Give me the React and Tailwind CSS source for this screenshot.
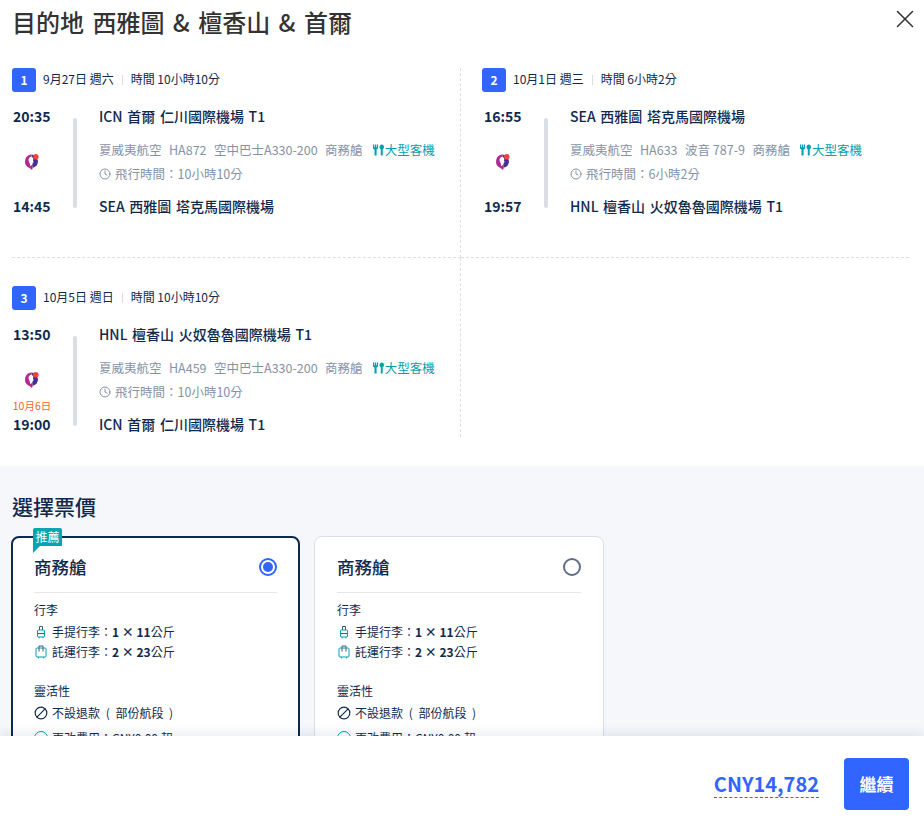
import { Clock, Ban, X } from 'lucide-react';

const FONT = "font-['Noto_Sans_CJK_TC','Noto_Sans',sans-serif]";

const segments = [
  {
    n: 1, date: '9月27日 週六', total: '時間 10小時10分',
    dep: '20:35', from: 'ICN 首爾 仁川國際機場 T1', arr: '14:45', to: 'SEA 西雅圖 塔克馬國際機場',
    flight: 'HA872', plane: '空中巴士A330-200', dur: '10小時10分',
  },
  {
    n: 2, date: '10月1日 週三', total: '時間 6小時2分',
    dep: '16:55', from: 'SEA 西雅圖 塔克馬國際機場', arr: '19:57', to: 'HNL 檀香山 火奴魯魯國際機場 T1',
    flight: 'HA633', plane: '波音 787-9', dur: '6小時2分',
  },
  {
    n: 3, date: '10月5日 週日', total: '時間 10小時10分',
    dep: '13:50', from: 'HNL 檀香山 火奴魯魯國際機場 T1', arr: '19:00', to: 'ICN 首爾 仁川國際機場 T1',
    flight: 'HA459', plane: '空中巴士A330-200', dur: '10小時10分', nextDay: '10月6日',
  },
];

function AirlineLogo() {
  return (
    <svg viewBox="0 0 16 18" className="w-4 h-[18px]">
      <path d="M7.500 1.500A7 7 0 0 0 5.500 15l2.500 2 .8-2.200L7.500 8z" fill="#b3278f" />
      <path d="M7.500 1.500a7 7 0 0 1 5 2.500l1.500 4a7 7 0 0 1-5.200 6.800L7.500 8z" fill="#4a2d91" />
      <path d="M7.800 3.500C5.300 3.800 4 6 4.800 8.300c.5 1.500 1.500 2.500 1.300 4.700 1.700-.6 2.700-1.900 2.700-3.300l1-.8-.8-1 .3-2.200z" fill="#fff" />
      <circle cx="11.800" cy="3.800" r="2.800" fill="#f0443c" />
    </svg>
  );
}

function MealIcon() {
  return (
    <svg viewBox="0 0 12 12" className="w-[13px] h-3 shrink-0" fill="#00a0ac">
      <path d="M.5.500h1.200v2.800h.7V.500h1.200v2.800h.7V.500h1.200v3.600c0 .8-.6 1.400-1.400 1.500v5.900H2V5.600C1.100 5.500.5 4.900.5 4.100z" />
      <path d="M9.300.500c1.200 0 2.200 1 2.200 2.500 0 1.200-.7 2.200-1.300 2.400v6.100H8.300V5.400C7.700 5.200 7 4.200 7 3 7 1.500 8.100.500 9.300.500z" />
    </svg>
  );
}

function CabinBag() {
  return (
    <svg viewBox="0 0 14 14" className="w-3.5 h-3.5 shrink-0" fill="none" strokeWidth="1">
      <path d="M5.500 5V1.500h3V5" stroke="#455873" />
      <rect x="3.500" y="5" width="7" height="7" rx="1" stroke="#00a0ac" />
      <path d="M3.500 8.500h7" stroke="#455873" />
      <path d="M5 12v1.300M9 12v1.300" stroke="#00a0ac" />
    </svg>
  );
}

function CheckedBag() {
  return (
    <svg viewBox="0 0 14 14" className="w-3.5 h-3.5 shrink-0" fill="none" strokeWidth="1">
      <path d="M5 3V1h4v2" stroke="#455873" />
      <rect x="2" y="3" width="10" height="9" rx="1" stroke="#00a0ac" />
      <path d="M5 3v3.500M9 3v3.500" stroke="#455873" />
      <path d="M4.500 12v1.300M9.500 12v1.300" stroke="#00a0ac" />
    </svg>
  );
}

function Segment({ s }) {
  return (
    <div>
      <div className="flex items-center h-6">
        <span className="w-6 h-6 rounded-[3px] bg-[#3264ff] text-white text-xs font-bold flex items-center justify-center">{s.n}</span>
        <span className="ml-[7px] text-xs leading-[22px] mb-0.5 text-[#0f294d]">{s.date}</span>
        <span className="ml-2 mr-2 w-px h-2.5 bg-[#dadfe6]"></span>
        <span className="text-xs leading-[22px] mb-0.5 text-[#0f294d]">{s.total}</span>
      </div>
      <div className="flex mt-3 h-[114px]">
        <div className={`flex flex-col items-start shrink-0 ${s.n === 2 ? 'w-[62px] pl-[2px]' : 'w-[61px] pl-px'}`}>
          <div className="text-sm leading-6 font-bold text-[#0f294d]">{s.dep}</div>
          <div className="flex-1 w-[38px] flex flex-col items-center justify-start pt-[25px]">
            <AirlineLogo />
            {s.nextDay && <div className="mt-[11px] text-[10.500px] leading-3 text-[#ff6421] whitespace-nowrap">{s.nextDay}</div>}
          </div>
          <div className="text-sm leading-6 font-bold text-[#0f294d]">{s.arr}</div>
        </div>
        <div className="w-1 h-[90px] mt-[14px] rounded-full bg-[#dadfe6] shrink-0"></div>
        <div className="ml-[22px] flex flex-col min-w-0">
          <div className="text-sm leading-6 font-medium text-[#0f294d] whitespace-nowrap [word-spacing:1.500px]">{s.from}</div>
          <div className="flex-1 pt-[10px]">
            <div className="flex items-center text-[12.5px] leading-6 text-[#8592a6] whitespace-nowrap">
              <span>夏威夷航空</span>
              <span className="ml-[7.500px]">{s.flight}</span>
              <span className="ml-[7.500px]">{s.plane}</span>
              <span className="ml-[7.500px]">商務艙</span>
              <span className="ml-[9px] flex items-center text-[#00a0ac]"><MealIcon />大型客機</span>
            </div>
            <div className="mt-px flex items-center text-[12.5px] leading-[22px] text-[#8592a6]">
              <Clock className="w-3 h-3 mr-1" />飛行時間：{s.dur}
            </div>
          </div>
          <div className="text-sm leading-6 font-medium text-[#0f294d] whitespace-nowrap [word-spacing:1.500px]">{s.to}</div>
        </div>
      </div>
    </div>
  );
}

function FareCard({ selected }) {
  return (
    <div className={`relative h-[240px] shrink-0 bg-white rounded-lg ${selected ? 'w-[289px] px-[21px] border-2 border-[#0f294d]' : 'w-[290px] px-[22px] border border-[#dadfe6]'}`}>
      {selected && (
        <div className="absolute left-[20px] top-[-10px] w-[29px] h-[18px] bg-[#00a7b3] rounded-t-[2px] text-white text-xs leading-[18px] text-center">
          推薦
          <div className="absolute left-0 top-[18px] w-0 h-0 border-t-[7px] border-t-[#00a7b3] border-r-[7px] border-r-transparent"></div>
        </div>
      )}
      <div className={`flex items-center justify-between border-b border-[#e4e7ec] ${selected ? 'h-[55px] pt-1' : 'h-[56px] pt-[5px]'}`}>
        <span className="text-[17.500px] font-medium text-[#0f294d]">商務艙</span>
        {selected ? (
          <span className="w-[18px] h-[18px] rounded-full border-2 border-[#3264ff] flex items-center justify-center">
            <span className="w-[10px] h-[10px] rounded-full bg-[#3264ff]"></span>
          </span>
        ) : (
          <span className="w-[18px] h-[18px] rounded-full border-2 border-[#5f6f87]"></span>
        )}
      </div>
      <div className="mt-[7px] text-xs leading-5 text-[#0f294d]">行李</div>
      <div className="mt-[2px] flex items-center text-xs leading-5 text-[#0f294d]">
        <CabinBag /><span className="ml-1">手提行李：<b>1 × 11</b>公斤</span>
      </div>
      <div className="flex items-center text-xs leading-5 text-[#0f294d]">
        <CheckedBag /><span className="ml-1">託運行李：<b>2 × 23</b>公斤</span>
      </div>
      <div className="mt-[19px] text-xs leading-5 text-[#0f294d]">靈活性</div>
      <div className="mt-[2px] flex items-center text-xs leading-5 text-[#0f294d]">
        <Ban className="w-3.5 h-3.5 shrink-0 -scale-x-100" /><span className="ml-1 [word-spacing:3px]">不設退款 ( 部份航段 )</span>
      </div>
      <div className="mt-[5px] flex items-center text-xs leading-5 text-[#0f294d]">
        <span className="w-3.5 h-3.5 rounded-full border border-[#00a0ac] shrink-0"></span><span className="ml-1">更改費用：CNY0.00 起</span>
      </div>
    </div>
  );
}

export default function App() {
  return (
    <div className={`${FONT} w-[924px] h-[822px] bg-white flex flex-col overflow-hidden`}>
      <div className="h-[68px] pl-3 pr-1 flex justify-between items-start shrink-0">
        <h1 className="mt-1 text-2xl leading-9 font-medium text-[#333] [word-spacing:3px]">目的地 西雅圖 &amp; 檀香山 &amp; 首爾</h1>
        <X className="mt-1 w-[30px] h-[30px] text-[#333]" strokeWidth={1.2} />
      </div>

      <div className="ml-3 mr-[15px] h-[398px] shrink-0 grid grid-cols-[449px_1fr] grid-rows-[190px_179px]">
        <div className="border-r border-b border-dashed border-[#dadfe6]"><Segment s={segments[0]} /></div>
        <div className="pl-[21px] border-b border-dashed border-[#dadfe6]"><Segment s={segments[1]} /></div>
        <div className="pt-[28px] border-r border-dashed border-[#dadfe6]"><Segment s={segments[2]} /></div>
        <div></div>
      </div>

      <div className="flex-1 min-h-0 bg-[#f5f7fa] overflow-hidden pl-[11px]">
        <h2 className="mt-[25px] pl-px text-[21px] leading-[30px] font-medium text-[#0f294d]">選擇票價</h2>
        <div className="mt-[15px] flex gap-[14px]">
          <FareCard selected />
          <FareCard />
        </div>
      </div>

      <div className="relative h-[86px] shrink-0 bg-white shadow-[0_-4px_10px_rgba(15,41,77,0.08)] flex items-start justify-end pt-[22px] pr-[15px]">
        <div className="h-[52px] flex items-center">
          <span className="mt-[1px] text-xl leading-[26px] font-bold text-[#3264ff] border-b border-dashed border-[#3264ff]">CNY14,782</span>
        </div>
        <button className="ml-[25px] w-[65px] h-[52px] rounded bg-[#3264ff] text-white text-[17px] font-bold">繼續</button>
      </div>
    </div>
  );
}
